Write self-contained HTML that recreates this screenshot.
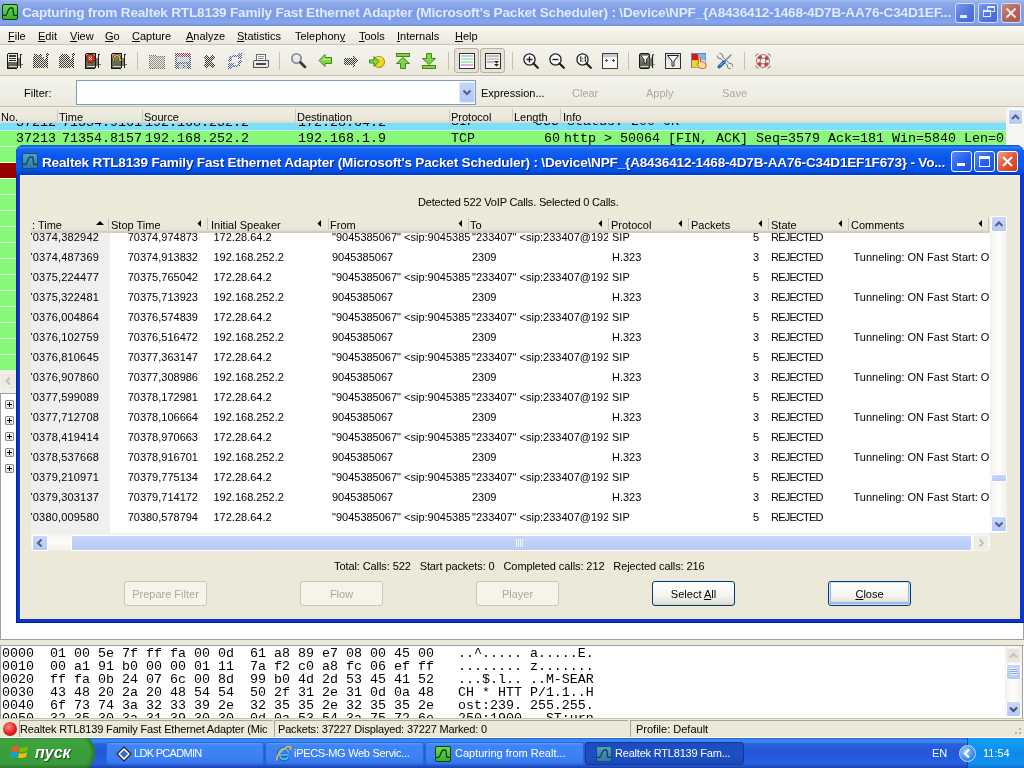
<!DOCTYPE html><html><head><meta charset="utf-8"><style>
*{margin:0;padding:0;box-sizing:border-box}
html,body{width:1024px;height:768px;overflow:hidden;background:#ECE9D8;will-change:transform;font-family:"Liberation Sans",sans-serif;font-size:11px;color:#000}
.a{position:absolute}
.t{position:absolute;white-space:pre;line-height:13px}
.r{text-align:right}
.m{font-family:"Liberation Mono",monospace;font-size:13.33px;line-height:16px}
.u{text-decoration:underline}
.dis{color:#ACA899}
.clip{position:absolute;left:0;top:0;width:1024px;height:768px}
.btn{position:absolute;height:25px;width:83px;border:1px solid #003C74;border-radius:3px;background:linear-gradient(#FFFFFF,#F4F4F0 60%,#E3E3DB 90%,#D6D0C5);text-align:center;line-height:25px}
.btn.d{border-color:#C9C7BA;background:#F5F4EA;color:#ACA899}
.hsep{position:absolute;width:1px;background:#C7C5B2}
.sarrow{position:absolute;width:0;height:0;border-top:4px solid transparent;border-bottom:4px solid transparent;border-right:5px solid #000}
.sb{position:absolute;border:1px solid #fff;border-radius:2px;background:linear-gradient(#C8D7FB,#B7CAF5)}
.tbtn{position:absolute;width:21px;height:21px;border:1px solid #fff;border-radius:3px}
</style></head><body>
<div class="a" style="left:0;top:0;width:1024px;height:26px;background:linear-gradient(#A0BAF0 0%,#8EABEC 12%,#809FE8 35%,#7C9BE6 65%,#88A6EA 86%,#7090DC 100%)"></div>
<div class="a" style="left:2px;top:4px;width:16px;height:16px;border:1px solid #0B3E0B;border-radius:2px;background:linear-gradient(#6FD85A,#3BAE2C)"></div>
<svg class="a" style="left:2px;top:4px" width="16" height="16"><path d="M1 11.3 L4 11.3 C5 11.3 6 4 8.5 4 L10.5 4 C11.5 4 11 11.3 12 11.3 L15 11.3" stroke="#0B3E0B" stroke-width="1.3" fill="none"/></svg>
<div class="t" style="left:22px;top:5px;font-weight:bold;font-size:13.6px;line-height:15px;color:#E2EAFB;letter-spacing:-0.21px">Capturing from Realtek RTL8139 Family Fast Ethernet Adapter (Microsoft's Packet Scheduler) : \Device\NPF_{A8436412-1468-4D7B-AA76-C34D1EF...</div>
<div class="tbtn" style="left:955px;top:3px;width:20px;height:20px;background:linear-gradient(135deg,#7A9AEA,#5476DE 55%,#4468D6);border-color:#D5DFF7"></div>
<div class="tbtn" style="left:978px;top:3px;width:20px;height:20px;background:linear-gradient(135deg,#7A9AEA,#5476DE 55%,#4468D6);border-color:#D5DFF7"></div>
<div class="tbtn" style="left:1001px;top:3px;width:20px;height:20px;background:linear-gradient(135deg,#C8887A,#B4645C 55%,#A85A54);border-color:#D5DFF7"></div>
<div class="a" style="left:960px;top:15px;width:7px;height:3px;background:#E4EAF8"></div>
<div class="a" style="left:987px;top:6px;width:8px;height:6px;border:1px solid #E4EAF8;border-top-width:2px"></div>
<div class="a" style="left:983px;top:10px;width:8px;height:7px;border:1px solid #E4EAF8;border-top-width:2px;background:#5476DE"></div>
<svg class="a" style="left:1001px;top:3px" width="20" height="20"><path d="M5.5 5.5 L14.5 14.5 M14.5 5.5 L5.5 14.5" stroke="#F3E6E3" stroke-width="2"/></svg>
<div class="a" style="left:0;top:26px;width:1024px;height:19px;background:linear-gradient(#FAFAF7 0%,#F3F2EB 30%,#EEECE1 70%,#E8E5D7 100%)"></div>
<div class="a" style="left:0;top:44px;width:1024px;height:1px;background:#C9C6B6"></div>
<div class="t" style="left:8px;top:30px"><span class="u">F</span>ile</div>
<div class="t" style="left:38px;top:30px"><span class="u">E</span>dit</div>
<div class="t" style="left:70px;top:30px"><span class="u">V</span>iew</div>
<div class="t" style="left:105px;top:30px"><span class="u">G</span>o</div>
<div class="t" style="left:132px;top:30px"><span class="u">C</span>apture</div>
<div class="t" style="left:186px;top:30px"><span class="u">A</span>nalyze</div>
<div class="t" style="left:237px;top:30px"><span class="u">S</span>tatistics</div>
<div class="t" style="left:295px;top:30px">Telephon<span class="u">y</span></div>
<div class="t" style="left:359px;top:30px"><span class="u">T</span>ools</div>
<div class="t" style="left:397px;top:30px"><span class="u">I</span>nternals</div>
<div class="t" style="left:455px;top:30px"><span class="u">H</span>elp</div>
<div class="a" style="left:0;top:45px;width:1024px;height:30px;background:linear-gradient(#F4F3EC,#EFEDE3 60%,#E9E7D9)"></div>
<div class="a" style="left:0;top:75px;width:1024px;height:1px;background:#C4C1B1"></div>
<div class="a" style="left:137px;top:52px;width:1px;height:18px;background:#C5C2B2"></div>
<div class="a" style="left:279px;top:52px;width:1px;height:18px;background:#C5C2B2"></div>
<div class="a" style="left:448px;top:52px;width:1px;height:18px;background:#C5C2B2"></div>
<div class="a" style="left:512px;top:52px;width:1px;height:18px;background:#C5C2B2"></div>
<div class="a" style="left:628px;top:52px;width:1px;height:18px;background:#C5C2B2"></div>
<div class="a" style="left:744px;top:52px;width:1px;height:18px;background:#C5C2B2"></div>
<div class="a" style="left:454px;top:48px;width:25px;height:25px;border:1px solid #B5B2A3;border-radius:3px;background:#E6E3D6"></div>
<div class="a" style="left:480px;top:48px;width:25px;height:25px;border:1px solid #B5B2A3;border-radius:3px;background:#E6E3D6"></div>
<svg width="0" height="0" style="position:absolute"><defs>
<pattern id="chk" width="2" height="2" patternUnits="userSpaceOnUse"><rect width="1" height="1" fill="#fff"/><rect x="1" y="1" width="1" height="1" fill="#fff"/></pattern>
<mask id="dm" maskUnits="userSpaceOnUse" x="0" y="0" width="16" height="16"><rect width="16" height="16" fill="url(#chk)"/></mask>
<linearGradient id="cardg" x1="0" y1="0" x2="0" y2="1"><stop offset="0" stop-color="#A8AE9C"/><stop offset="0.45" stop-color="#6E7862"/><stop offset="1" stop-color="#4E5A40"/></linearGradient>
</defs></svg>
<svg class="a" style="left:7px;top:53px" width="16" height="16" shape-rendering="crispEdges"><rect x="0.5" y="0.5" width="10" height="15" rx="1.5" fill="url(#cardg)" stroke="#151515"/><rect x="10.5" y="5" width="3" height="8" fill="#7A8070"/><path d="M13.5 15 V3 Q13.5 1.5 15 1.5" stroke="#202020" stroke-width="1.2" fill="none"/><path d="M13.5 11.5 H15.5" stroke="#707070" stroke-width="1"/><rect x="1.5" y="13" width="8" height="1" fill="#D8DCC8"/><rect x="1" y="1" width="9" height="8" fill="#F0F2F0"/><rect x="2" y="2" width="7" height="2" fill="#3A3A3A"/><rect x="2" y="5" width="7" height="1" fill="#333"/><rect x="2" y="7" width="7" height="1" fill="#222"/></svg>
<svg class="a" style="left:33px;top:53px" width="16" height="16" shape-rendering="crispEdges"><g mask="url(#dm)"><path d="M0 4 H11 V15 H0 Z" fill="#383838"/><rect x="11" y="6" width="3" height="8" fill="#383838"/><path d="M14 15 V3 Q14 1 16 1" stroke="#202020" stroke-width="2" fill="none"/><circle cx="3" cy="3" r="2.5" fill="#383838"/><circle cx="7" cy="3" r="2" fill="#383838"/></g></svg>
<svg class="a" style="left:59px;top:53px" width="16" height="16" shape-rendering="crispEdges"><g mask="url(#dm)"><path d="M0 4 H11 V15 H0 Z" fill="#383838"/><rect x="11" y="6" width="3" height="8" fill="#383838"/><path d="M14 15 V3 Q14 1 16 1" stroke="#202020" stroke-width="2" fill="none"/><circle cx="5.5" cy="5" r="4.5" fill="#383838"/></g></svg>
<svg class="a" style="left:85px;top:53px" width="16" height="16" shape-rendering="crispEdges"><rect x="0.5" y="0.5" width="10" height="15" rx="1.5" fill="url(#cardg)" stroke="#151515"/><rect x="10.5" y="5" width="3" height="8" fill="#7A8070"/><path d="M13.5 15 V3 Q13.5 1.5 15 1.5" stroke="#202020" stroke-width="1.2" fill="none"/><path d="M13.5 11.5 H15.5" stroke="#707070" stroke-width="1"/><rect x="1.5" y="13" width="8" height="1" fill="#D8DCC8"/><circle cx="5.5" cy="5.5" r="4.5" fill="#C83020" stroke="#6A1A10" stroke-width="0.8"/><circle cx="5" cy="4.8" r="2.5" fill="#E86850" opacity="0.6"/><path d="M3.8 3.8 L7.2 7.2 M7.2 3.8 L3.8 7.2" stroke="#FFE8E0" stroke-width="1.3"/></svg>
<svg class="a" style="left:111px;top:53px" width="16" height="16" shape-rendering="crispEdges"><rect x="0.5" y="0.5" width="10" height="15" rx="1.5" fill="url(#cardg)" stroke="#151515"/><rect x="10.5" y="5" width="3" height="8" fill="#7A8070"/><path d="M13.5 15 V3 Q13.5 1.5 15 1.5" stroke="#202020" stroke-width="1.2" fill="none"/><path d="M13.5 11.5 H15.5" stroke="#707070" stroke-width="1"/><rect x="1.5" y="13" width="8" height="1" fill="#D8DCC8"/><path d="M1.5 8 C1.5 3 4 1.5 6 1.5 C8.5 1.5 10 3.5 10 6 L11 6 L9 9 L7 6 L8 6 C8 4.5 7 3.5 6 3.5 C4 3.5 3.5 6 3.5 8 Z" fill="#D8B060" stroke="#5A4010" stroke-width="0.7"/></svg>
<svg class="a" style="left:149px;top:53px" width="16" height="16" shape-rendering="crispEdges"><g mask="url(#dm)"><path d="M0 2 H6 L7.5 3.5 H15 V15 H0 Z" fill="#8C8C8C"/><path d="M0 2 H6 L7.5 3.5 H15 V15 H0 Z" fill="none" stroke="#6A6A6A"/></g></svg>
<svg class="a" style="left:175px;top:53px" width="16" height="16" shape-rendering="crispEdges"><g mask="url(#dm)"><rect x="0" y="0" width="16" height="16" fill="#4A5A80"/><rect x="0" y="0" width="16" height="3" fill="#B03048"/><rect x="2" y="4" width="12" height="5" fill="#B8C0C8"/><rect x="4" y="11" width="8" height="5" fill="#A8B0B8"/><rect x="8" y="12" width="2" height="3" fill="#4A5A80"/></g></svg>
<svg class="a" style="left:201px;top:54px" width="16" height="16" shape-rendering="crispEdges"><g mask="url(#dm)"><path d="M2 3 L5 0 L8 3 L11 0 L14 3 L11 7.5 L14 12 L11 15 L8 11.5 L5 15 L2 12 L5 7.5 Z" fill="#303030"/></g></svg>
<svg class="a" style="left:227px;top:53px" width="16" height="16" shape-rendering="crispEdges"><g mask="url(#dm)"><path d="M1 9 C1 3 6 1 10 2 L12 0 L15 0 L15 6 L9 6 L11 4 C7 3 4 5 4 9 Z" fill="#4A64A0"/><path d="M15 7 C15 13 10 15 6 14 L4 16 L1 16 L1 10 L7 10 L5 12 C9 13 12 11 12 7 Z" fill="#4A64A0"/></g></svg>
<svg class="a" style="left:253px;top:53px" width="16" height="16" shape-rendering="crispEdges"><rect x="3.5" y="1.5" width="9" height="6" fill="#FCFCFC" stroke="#6A6A6A"/><path d="M5 3.5 H11 M5 5.5 H11" stroke="#999"/><rect x="0.5" y="7.5" width="15" height="7" rx="1.5" fill="#EAEAEA" stroke="#505050"/><rect x="3" y="10" width="10" height="2" fill="#4A4A4A"/></svg>
<svg class="a" style="left:291px;top:53px" width="16" height="16" ><circle cx="5.5" cy="5.5" r="4.6" fill="#E4EAF0" stroke="#8A8E96" stroke-width="1.8"/><path d="M3.5 4 A2.5 2.5 0 0 1 6.5 3" stroke="#fff" stroke-width="1" fill="none"/><path d="M9.5 9.5 L14 14" stroke="#3A3A3A" stroke-width="2.8" stroke-linecap="round"/></svg>
<svg class="a" style="left:318px;top:53px" width="16" height="16" ><path d="M1 7.5 L7 1.5 L7 4.5 L13.5 4.5 L13.5 10.5 L7 10.5 L7 13.5 Z" fill="#86D04A" stroke="#3F8A1A" stroke-linejoin="round"/><path d="M3 7.5 L7 3.5 L7 5.5 L12.5 5.5 L12.5 7.5 Z" fill="#B8F080" opacity="0.7"/></svg>
<svg class="a" style="left:344px;top:53px" width="16" height="16" shape-rendering="crispEdges"><g mask="url(#dm)"><path d="M14.5 8 L8.5 1 L8.5 4.5 L0 4.5 L0 11.5 L8.5 11.5 L8.5 15 Z" fill="#2A3A22"/></g></svg>
<svg class="a" style="left:369px;top:53px" width="16" height="16" ><circle cx="10" cy="9" r="5.5" fill="#F0D820" stroke="#A08A10" stroke-width="1"/><path d="M7 5.5 A4 4 0 0 1 13 6" stroke="#FFF8A0" stroke-width="1" fill="none"/><path d="M0.5 7 L5 7 L5 3.5 L10 8.5 L5 13.5 L5 10 L0.5 10 Z" fill="#86D04A" stroke="#3F8A1A" stroke-linejoin="round"/></svg>
<svg class="a" style="left:395px;top:53px" width="16" height="16" ><rect x="1.5" y="0.5" width="13" height="3" fill="#86D04A" stroke="#3F8A1A"/><path d="M8 4.5 L14.5 10.5 L10.5 10.5 L10.5 15.5 L5.5 15.5 L5.5 10.5 L1.5 10.5 Z" fill="#86D04A" stroke="#3F8A1A" stroke-linejoin="round"/></svg>
<svg class="a" style="left:421px;top:53px" width="16" height="16" ><rect x="1.5" y="12.5" width="13" height="3" fill="#86D04A" stroke="#3F8A1A"/><path d="M8 11.5 L14.5 5.5 L10.5 5.5 L10.5 0.5 L5.5 0.5 L5.5 5.5 L1.5 5.5 Z" fill="#86D04A" stroke="#3F8A1A" stroke-linejoin="round"/></svg>
<svg class="a" style="left:459px;top:53px" width="16" height="16" shape-rendering="crispEdges"><rect x="0.5" y="0.5" width="15" height="15" fill="#FFFFFF" stroke="#303030"/><rect x="2" y="2" width="12" height="2" fill="#C8C8C8"/><rect x="2" y="5" width="12" height="2" fill="#A8E8E0"/><rect x="2" y="8" width="12" height="2" fill="#B8E8B0"/><rect x="2" y="11" width="12" height="2" fill="#E8A8E0"/></svg>
<svg class="a" style="left:485px;top:53px" width="16" height="16" ><rect x="0.5" y="0.5" width="15" height="15" fill="#F0F0F0" stroke="#303030"/><rect x="2" y="2" width="12" height="2" fill="#C0C0C0"/><rect x="2" y="5" width="12" height="2" fill="#D0D0D0"/><rect x="2" y="8" width="7" height="2" fill="#B8B8B8"/><path d="M9 8 H14 L11.5 10.5 Z M9 11 H14 L11.5 13.5 Z" fill="#222"/></svg>
<svg class="a" style="left:523px;top:53px" width="16" height="16" ><circle cx="6.5" cy="6.5" r="5.6" fill="#FAFAFA" stroke="#202020" stroke-width="1.3"/><path d="M3.5 6.5 H9.5 M6.5 3.5 V9.5" stroke="#222" stroke-width="1.4"/><path d="M10.5 10.5 L14.8 14.8" stroke="#202020" stroke-width="2.2" stroke-linecap="round"/></svg>
<svg class="a" style="left:549px;top:53px" width="16" height="16" ><circle cx="6.5" cy="6.5" r="5.6" fill="#FAFAFA" stroke="#202020" stroke-width="1.3"/><path d="M3.5 6.5 H9.5" stroke="#222" stroke-width="1.4"/><path d="M10.5 10.5 L14.8 14.8" stroke="#202020" stroke-width="2.2" stroke-linecap="round"/></svg>
<svg class="a" style="left:576px;top:53px" width="16" height="16" ><circle cx="6.5" cy="6.5" r="5.6" fill="#FAFAFA" stroke="#202020" stroke-width="1.3"/><path d="M4 4.5 L4.8 4 V9 M8.5 4.5 L9.3 4 V9" stroke="#222" stroke-width="1.1" fill="none"/><rect x="6.2" y="5" width="1" height="1" fill="#222"/><rect x="6.2" y="7.5" width="1" height="1" fill="#222"/><path d="M10.5 10.5 L14.8 14.8" stroke="#202020" stroke-width="2.2" stroke-linecap="round"/></svg>
<svg class="a" style="left:602px;top:53px" width="16" height="16" shape-rendering="crispEdges"><rect x="0.5" y="0.5" width="15" height="15" fill="#F6F6F6" stroke="#404040"/><rect x="1" y="1" width="14" height="3" fill="#C8C8C8"/><path d="M3 7 H6 M4.5 5.5 V8.5 M10 7 H13 M11.5 5.5 V8.5" stroke="#505050"/></svg>
<svg class="a" style="left:639px;top:53px" width="16" height="16" ><rect x="0.5" y="0.5" width="10" height="15" rx="1.5" fill="url(#cardg)" stroke="#151515"/><rect x="10.5" y="5" width="3" height="8" fill="#7A8070"/><path d="M13.5 15 V3 Q13.5 1.5 15 1.5" stroke="#202020" stroke-width="1.2" fill="none"/><path d="M13.5 11.5 H15.5" stroke="#707070" stroke-width="1"/><rect x="1.5" y="13" width="8" height="1" fill="#D8DCC8"/><path d="M1.5 2 H11 L7.5 6.5 V10 H5 V6.5 Z" fill="#F0F4F8" stroke="#202020" stroke-width="0.9"/></svg>
<svg class="a" style="left:665px;top:53px" width="16" height="16" ><rect x="0.5" y="0.5" width="15" height="15" fill="#ECECEC" stroke="#303030"/><rect x="1" y="1" width="14" height="6" fill="#D8DCE0"/><path d="M2.5 2.5 H13.5 L9 8 V13 H7 V8 Z" fill="#F8F8F8" stroke="#202020" stroke-width="1"/></svg>
<svg class="a" style="left:691px;top:53px" width="16" height="16" ><rect x="0.5" y="0.5" width="14" height="14" fill="#fff" stroke="#7080A0"/><rect x="1" y="1" width="6.5" height="6.5" fill="#D81818"/><rect x="7.5" y="1" width="7" height="6.5" fill="#80B4E8"/><rect x="1" y="7.5" width="6.5" height="7" fill="#F0D820"/><rect x="7.5" y="7.5" width="7" height="7" fill="#D8E4F0"/><path d="M7.5 5 Q8.5 4 9.5 5 V9 L10.5 8.5 Q11.5 8.5 12 9.2 Q13 9 13.5 9.8 Q14.5 9.8 15 10.8 V13 Q15 15.5 12.5 15.5 H10 Q8.5 15.5 7.5 13.5 L6 11 Q6 10 7.5 10.5 Z" fill="#FFD8A0" stroke="#C06010" stroke-width="0.9"/></svg>
<svg class="a" style="left:717px;top:53px" width="16" height="16" ><path d="M3.5 3.5 L12.5 12.5" stroke="#7A7E82" stroke-width="3.6" stroke-linecap="round"/><circle cx="3" cy="3" r="2.7" fill="#EEF0F0" stroke="#7A7E82" stroke-width="1"/><circle cx="13" cy="13" r="2.7" fill="#EEF0F0" stroke="#7A7E82" stroke-width="1"/><path d="M3.5 3.5 L12.5 12.5" stroke="#EEF0F0" stroke-width="1.8"/><rect x="0" y="0" width="2.6" height="2.6" fill="#F0EFE8" transform="rotate(45 1.3 1.3)"/><rect x="13.4" y="13.4" width="2.6" height="2.6" fill="#F0EFE8" transform="rotate(45 14.7 14.7)"/><path d="M8 8 L13.8 2.2" stroke="#8A929A" stroke-width="1.7" stroke-linecap="round"/><path d="M2.2 13.8 L7 9" stroke="#2E66B8" stroke-width="3.4" stroke-linecap="round"/><path d="M2.8 12.6 L6 9.4" stroke="#9CC8F4" stroke-width="0.9"/></svg>
<svg class="a" style="left:755px;top:53px" width="16" height="16" ><circle cx="8" cy="8" r="4.7" fill="none" stroke="#F8F6F2" stroke-width="3.2"/><circle cx="8" cy="8" r="4.7" fill="none" stroke="#E03434" stroke-width="3.2" stroke-dasharray="3.69 3.69" stroke-dashoffset="-1.84"/><circle cx="8" cy="8" r="6.4" fill="none" stroke="#7A6A66" stroke-width="0.9"/><circle cx="8" cy="8" r="3" fill="#EEEEEA" stroke="#7A6A66" stroke-width="0.9"/><g fill="none" stroke="#9A6A60" stroke-width="1"><path d="M0.8 3.5 A2.6 2.6 0 0 1 3.5 0.8"/><path d="M12.5 0.8 A2.6 2.6 0 0 1 15.2 3.5"/><path d="M0.8 12.5 A2.6 2.6 0 0 0 3.5 15.2"/><path d="M15.2 12.5 A2.6 2.6 0 0 1 12.5 15.2"/></g></svg>
<div class="a" style="left:0;top:76px;width:1024px;height:31px;background:linear-gradient(#F4F3EC,#EEEDE3 70%,#E9E7DA)"></div><div class="a" style="left:0;top:106px;width:1024px;height:1px;background:#C4C1B1"></div>
<div class="t" style="left:24px;top:87px">Filter:</div>
<div class="a" style="left:76px;top:80px;width:400px;height:25px;border:1px solid #7F9DB9;background:#fff"></div>
<div class="a" style="left:459px;top:82px;width:16px;height:21px;border-radius:2px;border:1px solid #E0E8FA;background:linear-gradient(#C6D5FA,#B2C7F5)"></div>
<svg class="a" style="left:459px;top:82px" width="16" height="21"><path d="M4.5 8.5 L8 12 L11.5 8.5" stroke="#4D6185" stroke-width="2" fill="none"/></svg>
<div class="t" style="left:481px;top:87px">Expression...</div>
<div class="t dis" style="left:572px;top:87px">Clear</div>
<div class="t dis" style="left:646px;top:87px">Apply</div>
<div class="t dis" style="left:722px;top:87px">Save</div>
<div class="a" style="left:0;top:114px;width:1006px;height:16px;background:#7AE0FA"></div>
<div class="a m r" style="left:0;width:56px;top:115px">37212</div><div class="a m" style="left:62px;top:115px">71354.9161</div><div class="a m" style="left:145px;top:115px">192.168.252.2</div><div class="a m" style="left:298px;top:115px">172.28.64.2</div>
<div class="a m" style="left:451px;top:114px">SIP</div>
<div class="a m" style="left:535px;top:114px">533 Status: 200 OK</div>
<div class="a" style="left:0;top:130px;width:1006px;height:240px;background:#88F878"></div>
<div class="a" style="left:0;top:162px;width:16px;height:16px;background:#980000"></div>
<div class="a" style="left:0;top:146px;width:16px;height:1px;background:#E8FFE0"></div>
<div class="a" style="left:0;top:162px;width:16px;height:1px;background:#E8FFE0"></div>
<div class="a" style="left:0;top:178px;width:16px;height:1px;background:#E8FFE0"></div>
<div class="a" style="left:0;top:194px;width:16px;height:1px;background:#E8FFE0"></div>
<div class="a" style="left:0;top:210px;width:16px;height:1px;background:#E8FFE0"></div>
<div class="a" style="left:0;top:226px;width:16px;height:1px;background:#E8FFE0"></div>
<div class="a" style="left:0;top:242px;width:16px;height:1px;background:#E8FFE0"></div>
<div class="a" style="left:0;top:258px;width:16px;height:1px;background:#E8FFE0"></div>
<div class="a" style="left:0;top:274px;width:16px;height:1px;background:#E8FFE0"></div>
<div class="a" style="left:0;top:290px;width:16px;height:1px;background:#E8FFE0"></div>
<div class="a" style="left:0;top:306px;width:16px;height:1px;background:#E8FFE0"></div>
<div class="a" style="left:0;top:322px;width:16px;height:1px;background:#E8FFE0"></div>
<div class="a" style="left:0;top:338px;width:16px;height:1px;background:#E8FFE0"></div>
<div class="a" style="left:0;top:354px;width:16px;height:1px;background:#E8FFE0"></div>
<div class="a" style="left:0;top:130px;width:1006px;height:1px;background:#D0F8E0"></div>
<div class="a m r" style="left:0;width:56px;top:131px">37213</div>
<div class="a m" style="left:62px;top:131px">71354.8157</div>
<div class="a m" style="left:145px;top:131px">192.168.252.2</div>
<div class="a m" style="left:298px;top:131px">192.168.1.9</div>
<div class="a m" style="left:451px;top:131px">TCP</div>
<div class="a m r" style="left:500px;width:60px;top:131px">60</div>
<div class="a m" style="left:564px;top:131px">http &gt; 50064 [FIN, ACK] Seq=3579 Ack=181 Win=5840 Len=0</div>
<div class="a" style="left:0;top:107px;width:1007px;height:16px;background:linear-gradient(#EFEDE3,#EBE8DC 75%,#DCD8C8)"></div>
<div class="a" style="left:57px;top:109px;width:1px;height:13px;background:#CBC8B8"></div>
<div class="a" style="left:142px;top:109px;width:1px;height:13px;background:#CBC8B8"></div>
<div class="a" style="left:295px;top:109px;width:1px;height:13px;background:#CBC8B8"></div>
<div class="a" style="left:449px;top:109px;width:1px;height:13px;background:#CBC8B8"></div>
<div class="a" style="left:512px;top:109px;width:1px;height:13px;background:#CBC8B8"></div>
<div class="a" style="left:560px;top:109px;width:1px;height:13px;background:#CBC8B8"></div>
<div class="t" style="left:1px;top:111px">No.</div>
<div class="t" style="left:59px;top:111px">Time</div>
<div class="t" style="left:144px;top:111px">Source</div>
<div class="t" style="left:297px;top:111px">Destination</div>
<div class="t" style="left:451px;top:111px">Protocol</div>
<div class="t" style="left:514px;top:111px">Length</div>
<div class="t" style="left:563px;top:111px">Info</div>
<div class="a" style="left:1006px;top:107px;width:18px;height:263px;background:#F6F5EF"></div>
<div class="sb" style="left:1008px;top:109px;width:15px;height:16px"></div>
<svg class="a" style="left:1008px;top:109px" width="15" height="16"><path d="M4 10 L7.5 6.5 L11 10" stroke="#4D6185" stroke-width="2" fill="none"/></svg>
<div class="a" style="left:0;top:370px;width:16px;height:24px;background:#F1F0E8"></div>
<div class="a" style="left:2px;top:374px;width:13px;height:14px;border:1px solid #E8E6DC;border-radius:2px;background:#EEEDE5"></div>
<svg class="a" style="left:2px;top:374px" width="13" height="14"><path d="M8 3.5 L4.5 7 L8 10.5" stroke="#C4C2B8" stroke-width="2" fill="none"/></svg>
<div class="a" style="left:0;top:393px;width:1024px;height:246px;background:#fff;border-top:1px solid #A0A0A0;border-left:1px solid #A0A0A0"></div>
<div class="a" style="left:5px;top:400px;width:9px;height:9px;border:1px solid #8C8C8C;border-radius:1px;background:linear-gradient(#FFF,#E0DED8)"></div>
<div class="a" style="left:7px;top:404px;width:5px;height:1px;background:#000"></div>
<div class="a" style="left:9px;top:402px;width:1px;height:5px;background:#000"></div>
<div class="a" style="left:5px;top:416px;width:9px;height:9px;border:1px solid #8C8C8C;border-radius:1px;background:linear-gradient(#FFF,#E0DED8)"></div>
<div class="a" style="left:7px;top:420px;width:5px;height:1px;background:#000"></div>
<div class="a" style="left:9px;top:418px;width:1px;height:5px;background:#000"></div>
<div class="a" style="left:5px;top:432px;width:9px;height:9px;border:1px solid #8C8C8C;border-radius:1px;background:linear-gradient(#FFF,#E0DED8)"></div>
<div class="a" style="left:7px;top:436px;width:5px;height:1px;background:#000"></div>
<div class="a" style="left:9px;top:434px;width:1px;height:5px;background:#000"></div>
<div class="a" style="left:5px;top:448px;width:9px;height:9px;border:1px solid #8C8C8C;border-radius:1px;background:linear-gradient(#FFF,#E0DED8)"></div>
<div class="a" style="left:7px;top:452px;width:5px;height:1px;background:#000"></div>
<div class="a" style="left:9px;top:450px;width:1px;height:5px;background:#000"></div>
<div class="a" style="left:5px;top:464px;width:9px;height:9px;border:1px solid #8C8C8C;border-radius:1px;background:linear-gradient(#FFF,#E0DED8)"></div>
<div class="a" style="left:7px;top:468px;width:5px;height:1px;background:#000"></div>
<div class="a" style="left:9px;top:466px;width:1px;height:5px;background:#000"></div>
<div class="a" style="left:0;top:639px;width:1024px;height:1px;background:#A0A0A0"></div>
<div class="a" style="left:1023px;top:393px;width:1px;height:246px;background:#A0A0A0"></div>
<div class="a" style="left:0;top:645px;width:1024px;height:73px;background:#fff;border-top:1px solid #A0A0A0;border-left:1px solid #A0A0A0;overflow:hidden">
<div class="t" style="left:1px;top:1px;font-family:'Liberation Mono',monospace;font-size:13.33px;line-height:13px">0000  01 00 5e 7f ff fa 00 0d  61 a8 89 e7 08 00 45 00   ..^..... a.....E.</div>
<div class="t" style="left:1px;top:14px;font-family:'Liberation Mono',monospace;font-size:13.33px;line-height:13px">0010  00 a1 91 b0 00 00 01 11  7a f2 c0 a8 fc 06 ef ff   ........ z.......</div>
<div class="t" style="left:1px;top:27px;font-family:'Liberation Mono',monospace;font-size:13.33px;line-height:13px">0020  ff fa 0b 24 07 6c 00 8d  99 b0 4d 2d 53 45 41 52   ...$.l.. ..M-SEAR</div>
<div class="t" style="left:1px;top:40px;font-family:'Liberation Mono',monospace;font-size:13.33px;line-height:13px">0030  43 48 20 2a 20 48 54 54  50 2f 31 2e 31 0d 0a 48   CH * HTT P/1.1..H</div>
<div class="t" style="left:1px;top:53px;font-family:'Liberation Mono',monospace;font-size:13.33px;line-height:13px">0040  6f 73 74 3a 32 33 39 2e  32 35 35 2e 32 35 35 2e   ost:239. 255.255.</div>
<div class="t" style="left:1px;top:66px;font-family:'Liberation Mono',monospace;font-size:13.33px;line-height:13px">0050  32 35 30 3a 31 39 30 30  0d 0a 53 54 3a 75 72 6e   250:1900 ..ST:urn</div>
</div>
<div class="a" style="left:1005px;top:646px;width:17px;height:71px;background:linear-gradient(90deg,#F3F1EC,#FDFDFB 50%,#F1EFE8)"></div>
<div class="a" style="left:1022px;top:645px;width:1px;height:73px;background:#A0A0A0"></div>
<div class="sb" style="left:1006px;top:648px;width:15px;height:15px;background:#E8E6DC;border-color:#F4F3EE"></div>
<div class="sb" style="left:1006px;top:664px;width:15px;height:16px"></div>
<div class="a" style="left:1010px;top:668px;width:7px;height:7px;background:repeating-linear-gradient(#EEF3FE 0 1px,#8EA8E0 1px 2px)"></div>
<div class="sb" style="left:1006px;top:701px;width:15px;height:16px"></div>
<svg class="a" style="left:1006px;top:648px" width="15" height="15"><path d="M4 9.5 L7.5 6 L11 9.5" stroke="#C0C4C8" stroke-width="2" fill="none"/></svg>
<svg class="a" style="left:1006px;top:701px" width="15" height="16"><path d="M4 6.5 L7.5 10 L11 6.5" stroke="#3A4E78" stroke-width="2" fill="none"/></svg>
<div class="a" style="left:0;top:718px;width:1024px;height:20px;background:#ECE9D8;border-top:1px solid #C8C5B5"></div>
<div class="a" style="left:3px;top:722px;width:14px;height:14px;border-radius:50%;background:radial-gradient(circle at 40% 35%,#FF8A80,#E02020 55%,#A01010)"></div>
<div class="a" style="left:19px;top:720px;width:254px;height:18px;border-left:1px solid #A8A596;border-top:1px solid #A8A596"></div>
<div class="t" style="left:20px;top:723px;letter-spacing:-0.15px">Realtek RTL8139 Family Fast Ethernet Adapter (Mic</div>
<div class="a" style="left:274px;top:720px;width:354px;height:18px;border-left:1px solid #A8A596;border-top:1px solid #A8A596"></div>
<div class="t" style="left:278px;top:723px;letter-spacing:-0.17px">Packets: 37227 Displayed: 37227 Marked: 0</div>
<div class="a" style="left:630px;top:720px;width:394px;height:18px;border-left:1px solid #A8A596;border-top:1px solid #A8A596"></div>
<div class="t" style="left:636px;top:723px">Profile: Default</div>
<div class="a" style="left:1019px;top:728px;width:2px;height:2px;background:#B8B5A8"></div>
<div class="a" style="left:1015px;top:732px;width:2px;height:2px;background:#B8B5A8"></div>
<div class="a" style="left:1019px;top:732px;width:2px;height:2px;background:#B8B5A8"></div>
<div class="a" style="left:16px;top:145px;width:1008px;height:478px;background:#0A36D0;box-shadow:inset 1px 0 #0020A0,inset 0 -1px #001C90;border-radius:8px 8px 0 0"></div>
<div class="a" style="left:16px;top:145px;width:1008px;height:30px;border-radius:8px 8px 0 0;background:linear-gradient(#0A52C8 0%,#2A80F8 8%,#1462F2 16%,#0A56EA 45%,#0658EE 75%,#0048D8 92%,#0038C0 100%)"></div>
<div class="a" style="left:22px;top:153px;width:16px;height:16px;border:1px solid #1C4F6E;border-radius:2px;background:linear-gradient(#4FA0C8,#2E7BA6)"></div>
<svg class="a" style="left:22px;top:153px" width="16" height="16"><path d="M1 11.3 L4 11.3 C5 11.3 6 4 8.5 4 L10.5 4 C11.5 4 11 11.3 12 11.3 L15 11.3" stroke="#123D58" stroke-width="1.3" fill="none"/></svg>
<div class="t" style="left:42px;top:155px;font-weight:bold;font-size:13.6px;line-height:15px;color:#fff;letter-spacing:-0.2px;text-shadow:1px 1px #0A1E8C">Realtek RTL8139 Family Fast Ethernet Adapter (Microsoft's Packet Scheduler) : \Device\NPF_{A8436412-1468-4D7B-AA76-C34D1EF1F673} - Vo...</div>
<div class="tbtn" style="left:951px;top:151px;background:linear-gradient(135deg,#5A8EF8,#2562F0 50%,#1E4FD8)"></div>
<div class="tbtn" style="left:974px;top:151px;background:linear-gradient(135deg,#5A8EF8,#2562F0 50%,#1E4FD8)"></div>
<div class="tbtn" style="left:997px;top:151px;background:linear-gradient(135deg,#F0A080,#E2583A 50%,#C8401E)"></div>
<div class="a" style="left:957px;top:163px;width:8px;height:3px;background:#fff"></div>
<div class="a" style="left:979px;top:156px;width:11px;height:11px;border:1px solid #fff;border-top-width:3px"></div>
<svg class="a" style="left:997px;top:151px" width="21" height="21"><path d="M6 6 L15 15 M15 6 L6 15" stroke="#fff" stroke-width="2"/></svg>
<div class="a" style="left:20px;top:175px;width:1000px;height:444px;background:#ECE9D8;border-left:1px solid #F4F6FA;border-top:1px solid #F4F6FA"></div>
<div class="t" style="left:418px;top:196px;letter-spacing:-0.17px">Detected 522 VoIP Calls. Selected 0 Calls.</div>
<div class="a" style="left:31px;top:216px;width:959px;height:317px;background:#fff"></div>
<div class="a" style="left:31px;top:232px;width:79px;height:301px;background:#EFEFEF"></div>
<div class="a" style="left:31px;top:216px;width:959px;height:16px;background:linear-gradient(#EBEADB,#E9E7DA 80%,#D8D5C4)"></div>
<div class="a" style="left:31px;top:231px;width:959px;height:2px;background:#D2CFBE"></div>
<div class="a" style="left:108px;top:218px;width:1px;height:12px;background:#C9C6B6"></div>
<div class="a" style="left:207px;top:218px;width:1px;height:12px;background:#C9C6B6"></div>
<div class="a" style="left:328px;top:218px;width:1px;height:12px;background:#C9C6B6"></div>
<div class="a" style="left:468px;top:218px;width:1px;height:12px;background:#C9C6B6"></div>
<div class="a" style="left:608px;top:218px;width:1px;height:12px;background:#C9C6B6"></div>
<div class="a" style="left:688px;top:218px;width:1px;height:12px;background:#C9C6B6"></div>
<div class="a" style="left:768px;top:218px;width:1px;height:12px;background:#C9C6B6"></div>
<div class="a" style="left:848px;top:218px;width:1px;height:12px;background:#C9C6B6"></div>
<div class="a" style="left:988px;top:218px;width:1px;height:12px;background:#C9C6B6"></div>
<div class="t" style="left:32px;top:219px">: Time</div>
<div class="t" style="left:111px;top:219px">Stop Time</div>
<div class="t" style="left:211px;top:219px">Initial Speaker</div>
<div class="t" style="left:330px;top:219px">From</div>
<div class="t" style="left:470px;top:219px">To</div>
<div class="t" style="left:611px;top:219px">Protocol</div>
<div class="t" style="left:691px;top:219px">Packets</div>
<div class="t" style="left:771px;top:219px">State</div>
<div class="t" style="left:851px;top:219px">Comments</div>
<svg class="a" style="left:95px;top:218px" width="10" height="10"><path d="M1 7 L5 3 L9 7 Z" fill="#000"/></svg>
<svg class="a" style="left:195px;top:219px" width="8" height="10"><path d="M6 1 L2.5 4.5 L6 8 Z" fill="#000"/></svg>
<svg class="a" style="left:315px;top:219px" width="8" height="10"><path d="M6 1 L2.5 4.5 L6 8 Z" fill="#000"/></svg>
<svg class="a" style="left:456px;top:219px" width="8" height="10"><path d="M6 1 L2.5 4.5 L6 8 Z" fill="#000"/></svg>
<svg class="a" style="left:596px;top:219px" width="8" height="10"><path d="M6 1 L2.5 4.5 L6 8 Z" fill="#000"/></svg>
<svg class="a" style="left:676px;top:219px" width="8" height="10"><path d="M6 1 L2.5 4.5 L6 8 Z" fill="#000"/></svg>
<svg class="a" style="left:756px;top:219px" width="8" height="10"><path d="M6 1 L2.5 4.5 L6 8 Z" fill="#000"/></svg>
<svg class="a" style="left:836px;top:219px" width="8" height="10"><path d="M6 1 L2.5 4.5 L6 8 Z" fill="#000"/></svg>
<svg class="a" style="left:976px;top:219px" width="8" height="10"><path d="M6 1 L2.5 4.5 L6 8 Z" fill="#000"/></svg>
<div class="a" style="left:31px;top:232px;width:77px;height:301px;overflow:hidden"><div class="t r" style="top:-1px;right:9px;letter-spacing:0.18px">70374,382942</div><div class="t r" style="top:19px;right:9px;letter-spacing:0.18px">70374,487369</div><div class="t r" style="top:39px;right:9px;letter-spacing:0.18px">70375,224477</div><div class="t r" style="top:59px;right:9px;letter-spacing:0.18px">70375,322481</div><div class="t r" style="top:79px;right:9px;letter-spacing:0.18px">70376,004864</div><div class="t r" style="top:99px;right:9px;letter-spacing:0.18px">70376,102759</div><div class="t r" style="top:119px;right:9px;letter-spacing:0.18px">70376,810645</div><div class="t r" style="top:139px;right:9px;letter-spacing:0.18px">70376,907860</div><div class="t r" style="top:159px;right:9px;letter-spacing:0.18px">70377,599089</div><div class="t r" style="top:179px;right:9px;letter-spacing:0.18px">70377,712708</div><div class="t r" style="top:199px;right:9px;letter-spacing:0.18px">70378,419414</div><div class="t r" style="top:219px;right:9px;letter-spacing:0.18px">70378,537668</div><div class="t r" style="top:239px;right:9px;letter-spacing:0.18px">70379,210971</div><div class="t r" style="top:259px;right:9px;letter-spacing:0.18px">70379,303137</div><div class="t r" style="top:279px;right:9px;letter-spacing:0.18px">70380,009580</div></div>
<div class="a" style="left:108px;top:232px;width:99px;height:301px;overflow:hidden"><div class="t r" style="top:-1px;right:9px">70374,974873</div><div class="t r" style="top:19px;right:9px">70374,913832</div><div class="t r" style="top:39px;right:9px">70375,765042</div><div class="t r" style="top:59px;right:9px">70375,713923</div><div class="t r" style="top:79px;right:9px">70376,574839</div><div class="t r" style="top:99px;right:9px">70376,516472</div><div class="t r" style="top:119px;right:9px">70377,363147</div><div class="t r" style="top:139px;right:9px">70377,308986</div><div class="t r" style="top:159px;right:9px">70378,172981</div><div class="t r" style="top:179px;right:9px">70378,106664</div><div class="t r" style="top:199px;right:9px">70378,970663</div><div class="t r" style="top:219px;right:9px">70378,916701</div><div class="t r" style="top:239px;right:9px">70379,775134</div><div class="t r" style="top:259px;right:9px">70379,714172</div><div class="t r" style="top:279px;right:9px">70380,578794</div></div>
<div class="a" style="left:207px;top:232px;width:121px;height:301px;overflow:hidden"><div class="t" style="top:-1px;left:6.5px">172.28.64.2</div><div class="t" style="top:19px;left:6.5px">192.168.252.2</div><div class="t" style="top:39px;left:6.5px">172.28.64.2</div><div class="t" style="top:59px;left:6.5px">192.168.252.2</div><div class="t" style="top:79px;left:6.5px">172.28.64.2</div><div class="t" style="top:99px;left:6.5px">192.168.252.2</div><div class="t" style="top:119px;left:6.5px">172.28.64.2</div><div class="t" style="top:139px;left:6.5px">192.168.252.2</div><div class="t" style="top:159px;left:6.5px">172.28.64.2</div><div class="t" style="top:179px;left:6.5px">192.168.252.2</div><div class="t" style="top:199px;left:6.5px">172.28.64.2</div><div class="t" style="top:219px;left:6.5px">192.168.252.2</div><div class="t" style="top:239px;left:6.5px">172.28.64.2</div><div class="t" style="top:259px;left:6.5px">192.168.252.2</div><div class="t" style="top:279px;left:6.5px">172.28.64.2</div></div>
<div class="a" style="left:328px;top:232px;width:142px;height:301px;overflow:hidden"><div class="t" style="top:-1px;left:4px">"9045385067" &lt;sip:9045385</div><div class="t" style="top:19px;left:4px">9045385067</div><div class="t" style="top:39px;left:4px">"9045385067" &lt;sip:9045385</div><div class="t" style="top:59px;left:4px">9045385067</div><div class="t" style="top:79px;left:4px">"9045385067" &lt;sip:9045385</div><div class="t" style="top:99px;left:4px">9045385067</div><div class="t" style="top:119px;left:4px">"9045385067" &lt;sip:9045385</div><div class="t" style="top:139px;left:4px">9045385067</div><div class="t" style="top:159px;left:4px">"9045385067" &lt;sip:9045385</div><div class="t" style="top:179px;left:4px">9045385067</div><div class="t" style="top:199px;left:4px">"9045385067" &lt;sip:9045385</div><div class="t" style="top:219px;left:4px">9045385067</div><div class="t" style="top:239px;left:4px">"9045385067" &lt;sip:9045385</div><div class="t" style="top:259px;left:4px">9045385067</div><div class="t" style="top:279px;left:4px">"9045385067" &lt;sip:9045385</div></div>
<div class="a" style="left:470px;top:232px;width:138px;height:301px;overflow:hidden"><div class="t" style="top:-1px;left:2px">"233407" &lt;sip:233407@192</div><div class="t" style="top:19px;left:2px">2309</div><div class="t" style="top:39px;left:2px">"233407" &lt;sip:233407@192</div><div class="t" style="top:59px;left:2px">2309</div><div class="t" style="top:79px;left:2px">"233407" &lt;sip:233407@192</div><div class="t" style="top:99px;left:2px">2309</div><div class="t" style="top:119px;left:2px">"233407" &lt;sip:233407@192</div><div class="t" style="top:139px;left:2px">2309</div><div class="t" style="top:159px;left:2px">"233407" &lt;sip:233407@192</div><div class="t" style="top:179px;left:2px">2309</div><div class="t" style="top:199px;left:2px">"233407" &lt;sip:233407@192</div><div class="t" style="top:219px;left:2px">2309</div><div class="t" style="top:239px;left:2px">"233407" &lt;sip:233407@192</div><div class="t" style="top:259px;left:2px">2309</div><div class="t" style="top:279px;left:2px">"233407" &lt;sip:233407@192</div></div>
<div class="a" style="left:608px;top:232px;width:80px;height:301px;overflow:hidden"><div class="t" style="top:-1px;left:4px">SIP</div><div class="t" style="top:19px;left:4px">H.323</div><div class="t" style="top:39px;left:4px">SIP</div><div class="t" style="top:59px;left:4px">H.323</div><div class="t" style="top:79px;left:4px">SIP</div><div class="t" style="top:99px;left:4px">H.323</div><div class="t" style="top:119px;left:4px">SIP</div><div class="t" style="top:139px;left:4px">H.323</div><div class="t" style="top:159px;left:4px">SIP</div><div class="t" style="top:179px;left:4px">H.323</div><div class="t" style="top:199px;left:4px">SIP</div><div class="t" style="top:219px;left:4px">H.323</div><div class="t" style="top:239px;left:4px">SIP</div><div class="t" style="top:259px;left:4px">H.323</div><div class="t" style="top:279px;left:4px">SIP</div></div>
<div class="a" style="left:688px;top:232px;width:80px;height:301px;overflow:hidden"><div class="t r" style="top:-1px;right:9px">5</div><div class="t r" style="top:19px;right:9px">3</div><div class="t r" style="top:39px;right:9px">5</div><div class="t r" style="top:59px;right:9px">3</div><div class="t r" style="top:79px;right:9px">5</div><div class="t r" style="top:99px;right:9px">3</div><div class="t r" style="top:119px;right:9px">5</div><div class="t r" style="top:139px;right:9px">3</div><div class="t r" style="top:159px;right:9px">5</div><div class="t r" style="top:179px;right:9px">3</div><div class="t r" style="top:199px;right:9px">5</div><div class="t r" style="top:219px;right:9px">3</div><div class="t r" style="top:239px;right:9px">5</div><div class="t r" style="top:259px;right:9px">3</div><div class="t r" style="top:279px;right:9px">5</div></div>
<div class="a" style="left:768px;top:232px;width:80px;height:301px;overflow:hidden"><div class="t" style="top:-1px;left:3px;letter-spacing:-0.8px">REJECTED</div><div class="t" style="top:19px;left:3px;letter-spacing:-0.8px">REJECTED</div><div class="t" style="top:39px;left:3px;letter-spacing:-0.8px">REJECTED</div><div class="t" style="top:59px;left:3px;letter-spacing:-0.8px">REJECTED</div><div class="t" style="top:79px;left:3px;letter-spacing:-0.8px">REJECTED</div><div class="t" style="top:99px;left:3px;letter-spacing:-0.8px">REJECTED</div><div class="t" style="top:119px;left:3px;letter-spacing:-0.8px">REJECTED</div><div class="t" style="top:139px;left:3px;letter-spacing:-0.8px">REJECTED</div><div class="t" style="top:159px;left:3px;letter-spacing:-0.8px">REJECTED</div><div class="t" style="top:179px;left:3px;letter-spacing:-0.8px">REJECTED</div><div class="t" style="top:199px;left:3px;letter-spacing:-0.8px">REJECTED</div><div class="t" style="top:219px;left:3px;letter-spacing:-0.8px">REJECTED</div><div class="t" style="top:239px;left:3px;letter-spacing:-0.8px">REJECTED</div><div class="t" style="top:259px;left:3px;letter-spacing:-0.8px">REJECTED</div><div class="t" style="top:279px;left:3px;letter-spacing:-0.8px">REJECTED</div></div>
<div class="a" style="left:848px;top:232px;width:142px;height:301px;overflow:hidden"><div class="t" style="top:19px;left:5.5px">Tunneling: ON Fast Start: O</div><div class="t" style="top:59px;left:5.5px">Tunneling: ON Fast Start: O</div><div class="t" style="top:99px;left:5.5px">Tunneling: ON Fast Start: O</div><div class="t" style="top:139px;left:5.5px">Tunneling: ON Fast Start: O</div><div class="t" style="top:179px;left:5.5px">Tunneling: ON Fast Start: O</div><div class="t" style="top:219px;left:5.5px">Tunneling: ON Fast Start: O</div><div class="t" style="top:259px;left:5.5px">Tunneling: ON Fast Start: O</div></div>
<div class="a" style="left:990px;top:216px;width:17px;height:317px;background:linear-gradient(90deg,#F3F1EC,#FDFDFB 50%,#F1EFE8)"></div>
<div class="sb" style="left:991px;top:216px;width:16px;height:16px"></div>
<svg class="a" style="left:991px;top:216px" width="16" height="16"><path d="M4.5 10 L8 6.5 L11.5 10" stroke="#4D6185" stroke-width="2" fill="none"/></svg>
<div class="sb" style="left:991px;top:474px;width:16px;height:8px"></div>
<div class="sb" style="left:991px;top:516px;width:16px;height:16px"></div>
<svg class="a" style="left:991px;top:516px" width="16" height="16"><path d="M4.5 6.5 L8 10 L11.5 6.5" stroke="#4D6185" stroke-width="2" fill="none"/></svg>
<div class="a" style="left:31px;top:533px;width:959px;height:18px;background:linear-gradient(#F3F1EC,#FDFDFB 50%,#F1EFE8)"></div>
<div class="sb" style="left:32px;top:535px;width:16px;height:16px"></div>
<svg class="a" style="left:32px;top:535px" width="16" height="16"><path d="M9.5 4.5 L6 8 L9.5 11.5" stroke="#4D6185" stroke-width="2" fill="none"/></svg>
<div class="sb" style="left:71px;top:535px;width:901px;height:16px"></div>
<div class="a" style="left:516px;top:539px;width:8px;height:8px;background:repeating-linear-gradient(90deg,#EEF3FE 0 1px,transparent 1px 2px)"></div>
<div class="sb" style="left:973px;top:535px;width:16px;height:16px;background:#EEEDE6;border-color:#F6F6F2"></div>
<svg class="a" style="left:973px;top:535px" width="16" height="16"><path d="M6.5 4.5 L10 8 L6.5 11.5" stroke="#C4C2B8" stroke-width="2" fill="none"/></svg>
<div class="t" style="left:334px;top:560px;letter-spacing:-0.09px">Total: Calls: 522   Start packets: 0   Completed calls: 212   Rejected calls: 216</div>
<div class="btn d" style="left:124px;top:581px">Prepare Filter</div>
<div class="btn d" style="left:300px;top:581px">Flow</div>
<div class="btn d" style="left:476px;top:581px">Player</div>
<div class="btn" style="left:652px;top:581px">Select <span class="u">A</span>ll</div>
<div class="btn" style="left:828px;top:581px;box-shadow:inset 0 0 0 1px #D4E2FA,inset 0 -1px 0 2px #9DB6EE"><span class="u">C</span>lose</div>
<div class="a" style="left:0;top:737px;width:1024px;height:1px;background:#FFFFFF"></div><div class="a" style="left:0;top:738px;width:1024px;height:30px;background:linear-gradient(#2A5CC8 0%,#3A8AF2 6%,#3A86F0 12%,#2860DC 22%,#2356D8 50%,#2560E0 85%,#1E4CC0 96%,#1A40A8 100%)"></div>
<div class="a" style="left:0;top:738px;width:95px;height:30px;border-radius:0 9px 9px 0/0 15px 15px 0;background:linear-gradient(#4E9E4E 0%,#3DA33D 12%,#39A039 50%,#3A9A3A 85%,#2E7E2E 100%);box-shadow:inset -3px 0 3px #2A7A2A"></div>
<svg class="a" style="left:10px;top:743px" width="20" height="20"><path d="M2 4 C5 2 7 3 9 4 L8 9 C6 8 4 8 1 9 Z" fill="#F05A28"/><path d="M10 4 C13 5 15 5 18 3 L17 8 C14 9 12 9 9 9 Z" fill="#7FBA00"/><path d="M1 10 C4 9 6 9 8 10 L7 15 C5 14 3 14 0 15 Z" fill="#00A4EF"/><path d="M9 10 C12 11 14 11 17 9 L16 14 C13 15 11 15 8 15 Z" fill="#FFB900"/></svg>
<div class="t" style="left:35px;top:743px;font-size:16px;line-height:20px;font-weight:bold;font-style:italic;color:#fff;text-shadow:1px 1px 1px #1A4A1A">пуск</div>
<div class="a" style="left:106px;top:742px;width:158px;height:23px;border-radius:3px;background:linear-gradient(#5A9AFB 0%,#3F85F5 12%,#3C80F2 70%,#3472E8 100%);border:1px solid #2C65D8"></div>
<div class="t" style="left:134px;top:747px;color:#fff;letter-spacing:-0.7px">LDK PCADMIN</div>
<div class="a" style="left:265px;top:742px;width:159px;height:23px;border-radius:3px;background:linear-gradient(#5A9AFB 0%,#3F85F5 12%,#3C80F2 70%,#3472E8 100%);border:1px solid #2C65D8"></div>
<div class="t" style="left:294px;top:747px;color:#fff;letter-spacing:-0.3px">iPECS-MG Web Servic...</div>
<div class="a" style="left:425px;top:742px;width:159px;height:23px;border-radius:3px;background:linear-gradient(#5A9AFB 0%,#3F85F5 12%,#3C80F2 70%,#3472E8 100%);border:1px solid #2C65D8"></div>
<div class="t" style="left:455px;top:747px;color:#fff;letter-spacing:0px">Capturing from Realt...</div>
<div class="a" style="left:585px;top:742px;width:159px;height:23px;border-radius:3px;background:linear-gradient(#1B4CC0,#1E50C4 50%,#1A4AB8);border:1px solid #15379A"></div>
<div class="t" style="left:615px;top:747px;color:#fff;letter-spacing:-0.2px">Realtek RTL8139 Fam...</div>
<svg class="a" style="left:116px;top:746px" width="16" height="16"><path d="M8 1 L15 8 L8 15 L1 8 Z" fill="#fff" stroke="#222" stroke-width="1.2"/><path d="M8 4 L12 8 L8 12 L4 8 Z" fill="#3A6AD0"/></svg>
<svg class="a" style="left:275px;top:745px" width="17" height="17"><path d="M13.8 9.8 H4.2 A4.8 4.8 0 1 1 13.6 8.2 M13.2 12 A4.8 4.8 0 0 1 4.6 11" stroke="#1E5AB0" stroke-width="3.6" fill="none"/><path d="M13.8 9.8 H4.2 A4.8 4.8 0 1 1 13.6 8.2 M13.2 12 A4.8 4.8 0 0 1 4.6 11" stroke="#50B8F8" stroke-width="2" fill="none"/><path d="M2 15.5 C0.5 12 7 3 14.5 1.5 C16.5 1.2 16 3.5 14.5 5" stroke="#F0B840" stroke-width="1.5" fill="none"/></svg>
<div class="a" style="left:435px;top:746px;width:16px;height:16px;border:1px solid #0B3E0B;border-radius:2px;background:linear-gradient(#6FD85A,#3BAE2C)"></div>
<svg class="a" style="left:435px;top:746px" width="16" height="16"><path d="M1 11.3 L4 11.3 C5 11.3 6 4 8.5 4 L10.5 4 C11.5 4 11 11.3 12 11.3 L15 11.3" stroke="#0B3E0B" stroke-width="1.3" fill="none"/></svg>
<div class="a" style="left:596px;top:746px;width:16px;height:16px;border:1px solid #1C4F6E;border-radius:2px;background:linear-gradient(#4FA0C8,#2E7BA6)"></div>
<svg class="a" style="left:596px;top:746px" width="16" height="16"><path d="M1 11.3 L4 11.3 C5 11.3 6 4 8.5 4 L10.5 4 C11.5 4 11 11.3 12 11.3 L15 11.3" stroke="#123D58" stroke-width="1.3" fill="none"/></svg>
<div class="a" style="left:967px;top:738px;width:57px;height:30px;background:linear-gradient(#1F94F0 0%,#11A0F5 10%,#0C8AEB 50%,#1090EE 85%,#0D6FCF 100%);border-left:1px solid #1042A8"></div>
<div class="t" style="left:932px;top:747px;color:#fff">EN</div>
<div class="a" style="left:959px;top:745px;width:17px;height:17px;border-radius:50%;background:radial-gradient(circle at 40% 35%,#9CCFFF,#3C8AF0 60%,#2060C8);border:1px solid #D0E4FF"></div>
<svg class="a" style="left:959px;top:745px" width="17" height="17"><path d="M10 4.5 L6 8.5 L10 12.5" stroke="#fff" stroke-width="2.2" fill="none"/></svg>
<div class="t" style="left:983px;top:747px;color:#fff">11:54</div>
</body></html>
